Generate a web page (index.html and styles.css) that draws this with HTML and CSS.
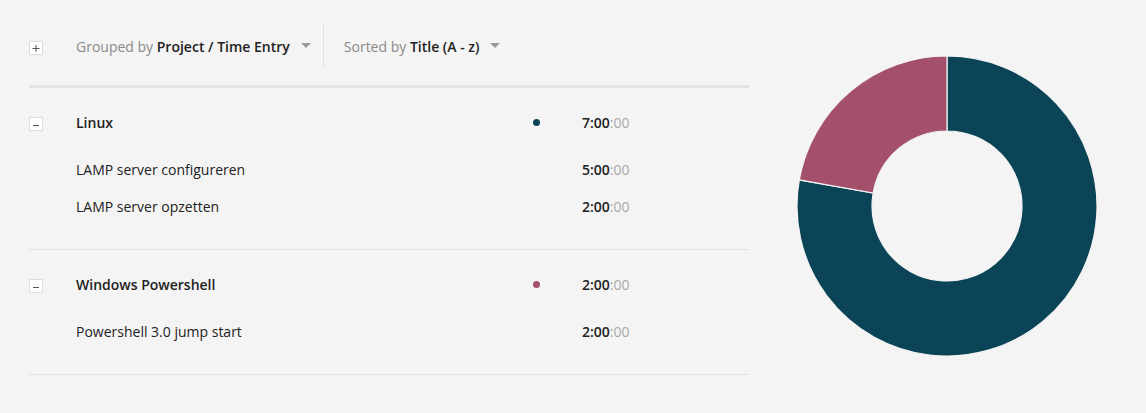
FILE: index.html
```html
<!DOCTYPE html>
<html lang="nl">
<head>
<meta charset="utf-8">
<title>Report</title>
<link rel="stylesheet" href="styles.css">
</head>
<body>
<div class="page">
  <div class="list">
    <div class="toolbar">
      <span class="toggle toggle-plus"><svg width="12" height="12" viewBox="0 0 12 12"><path d="M2.5 6.5h7M6 3v7" stroke="#555" stroke-width="1"/></svg></span>
      <div class="menu menu-group">
        <span class="muted">Grouped by</span>&nbsp;<strong>Project / Time Entry</strong>
        <span class="caret"></span>
      </div>
      <span class="divider"></span>
      <div class="menu menu-sort">
        <span class="muted">Sorted by</span>&nbsp;<strong>Title (A - z)</strong>
        <span class="caret"></span>
      </div>
    </div>
    <div class="rule"></div>

    <div class="group">
      <div class="row head">
        <span class="toggle"><svg width="12" height="12" viewBox="0 0 12 12"><path d="M3 7.5h6" stroke="#555" stroke-width="1"/></svg></span>
        <span class="name">Linux</span>
        <span class="dot dot-teal"></span>
        <span class="time"><b>7:00</b><i>:00</i></span>
      </div>
      <div class="row child">
        <span class="name">LAMP server configureren</span>
        <span class="time"><b>5:00</b><i>:00</i></span>
      </div>
      <div class="row child">
        <span class="name">LAMP server opzetten</span>
        <span class="time"><b>2:00</b><i>:00</i></span>
      </div>
    </div>

    <div class="group">
      <div class="row head">
        <span class="toggle"><svg width="12" height="12" viewBox="0 0 12 12"><path d="M3 7.5h6" stroke="#555" stroke-width="1"/></svg></span>
        <span class="name">Windows Powershell</span>
        <span class="dot dot-rose"></span>
        <span class="time"><b>2:00</b><i>:00</i></span>
      </div>
      <div class="row child">
        <span class="name">Powershell 3.0 jump start</span>
        <span class="time"><b>2:00</b><i>:00</i></span>
      </div>
    </div>
  </div>

  <div class="chart">
    <svg width="300" height="300" viewBox="0 0 300 300">
      <path d="M150 0 A150 150 0 1 1 2.28 123.95 L76.14 136.98 A75 75 0 1 0 150 75 Z" fill="#0b4457" stroke="#f4f4f4" stroke-width="1.2"/>
      <path d="M2.28 123.95 A150 150 0 0 1 150 0 L150 75 A75 75 0 0 0 76.14 136.98 Z" fill="#a4506a" stroke="#f4f4f4" stroke-width="1.2"/>
    </svg>
  </div>
</div>
</body>
</html>
```

FILE: styles.css
```css
* { box-sizing: border-box; }

body {
  margin: 0;
  background: #f4f4f4;
  font-family: "Open Sans", "Liberation Sans", sans-serif;
  font-size: 14px;
  color: #222;
}

.page {
  display: flex;
  padding-left: 29px;
}

.list {
  width: 720px;
}

.toolbar {
  display: flex;
  align-items: center;
  height: 43px;
  margin-top: 24px;
}

.toggle {
  display: inline-flex;
  align-items: center;
  justify-content: center;
  width: 14px;
  height: 14px;
  background: #fff;
  border: 1px solid #dcdcdc;
  flex: none;
}

.toggle-plus {
  margin-top: 5px;
  margin-right: 33px;
}

.menu {
  display: flex;
  align-items: center;
  white-space: nowrap;
  margin-top: 2px;
}

.menu strong {
  font-weight: 600;
  color: #222;
}

.muted {
  color: #8a8a8a;
}

.caret {
  width: 0;
  height: 0;
  border-left: 5px solid transparent;
  border-right: 5px solid transparent;
  border-top: 5px solid #9a9a9a;
  margin-left: 11px;
  margin-top: -2px;
}

.divider {
  align-self: stretch;
  width: 1px;
  background: #e0e0e0;
  margin: 0 20px 0 12px;
}

.rule {
  height: 3px;
  background: #e4e4e4;
  margin-top: 18px;
}

.group {
  padding: 16px 0 24px;
  border-bottom: 1px solid #e2e2e2;
}

.row {
  display: flex;
  align-items: center;
  height: 37px;
}

.row.head {
  margin-bottom: 10px;
}

.row.head .toggle {
  margin-top: 2px;
}

.row.head .name {
  font-weight: 600;
  margin-left: 33px;
}

.row.child {
  padding-left: 47px;
}

.name {
  flex: 1;
  color: #222;
}

.dot {
  width: 7px;
  height: 7px;
  border-radius: 50%;
  margin-right: 42px;
  flex: none;
}

.dot-teal { background: #0b4457; }
.dot-rose { background: #a4506a; }

.time {
  width: 167px;
  flex: none;
}

.time b {
  font-weight: 600;
  color: #222;
}

.time i {
  font-style: normal;
  color: #a9a9a9;
}

.chart {
  margin-left: 48px;
  margin-top: 56px;
}

.chart svg {
  display: block;
}
```
